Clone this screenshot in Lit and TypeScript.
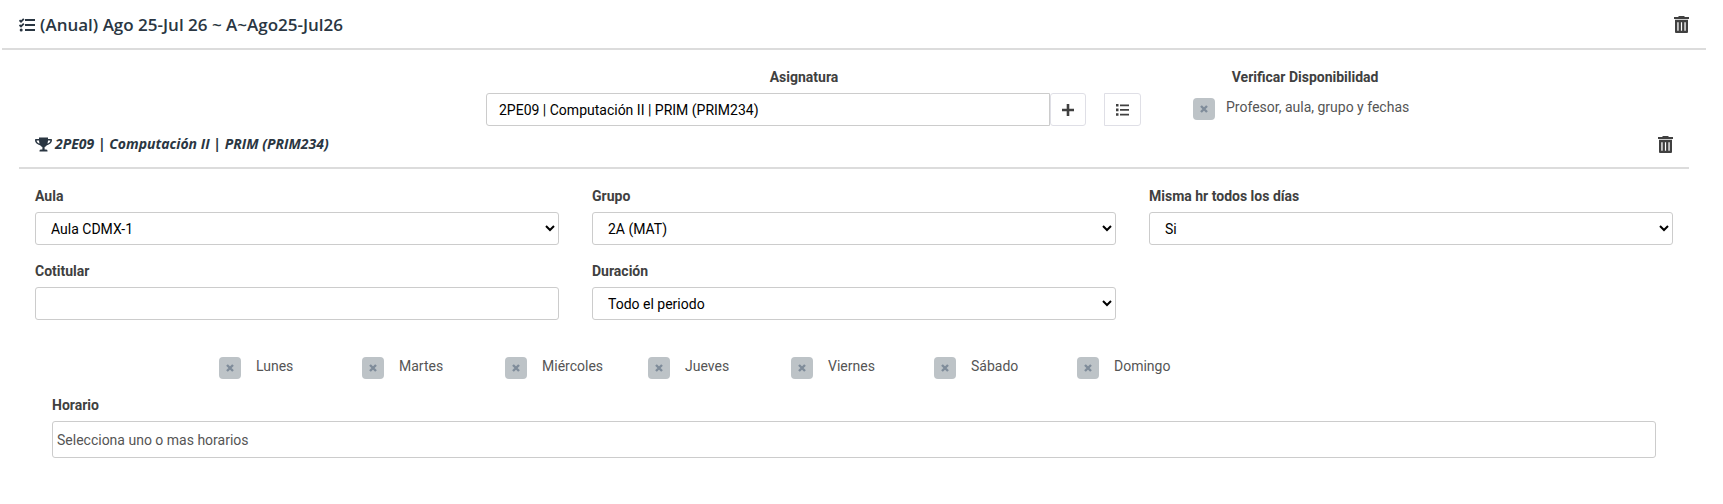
import { LitElement, html, css } from "lit";
import { customElement, property } from "lit/decorators.js";

const tasksIcon = html`<svg class="icon" width="17" height="14" viewBox="0 0 17 14" aria-hidden="true">
  <g fill="none" stroke="currentColor" stroke-width="1.8"><path d="M.5 2.200 2 3.700 4.800.800M.5 7 2 8.500 4.800 5.600" /></g>
  <g fill="currentColor"><circle cx="2.200" cy="12" r="1.500" /><path d="M6 1h10v2H6zM6 6h10v2H6zM6 11h10v2H6z" /></g>
</svg>`;

const trophyIcon = html`<svg class="icon" width="17" height="15" viewBox="0 0 17 15" aria-hidden="true">
  <path fill="currentColor" fill-rule="evenodd" d="M4 .5h9V2h3.200q.8 0 .8.800C17 6 14.500 7.800 11.800 8.200 11 9.300 10.200 9.800 9.600 10v2.500h1.200q1.700 0 1.700 1.300v.7h-8v-.7q0-1.300 1.700-1.300h1.200V10C6.800 9.800 6 9.300 5.200 8.200 2.500 7.800 0 6 0 2.800 0 2.200.3 2 .8 2H4zM1.600 3.500C1.800 5.200 3 6.200 4.600 6.600 4.200 5.700 4 4.600 4 3.500zm13.800 0H13c0 1.100-.2 2.200-.6 3.100 1.600-.4 2.800-1.400 3-3.100z" />
</svg>`;

const trashIcon = html`<svg width="15" height="17" viewBox="0 0 15 17" aria-hidden="true">
  <path fill="currentColor" d="M5 0h5l1 1h4v2H0V1h4z" />
  <path fill="currentColor" fill-rule="evenodd" d="M1 3.700h13V16q0 1-1 1H2q-1 0-1-1zM3.300 6.200v8.500h1.300V6.200zm3.600 0v8.500h1.200V6.200zm3.500 0v8.500h1.300V6.200z" />
</svg>`;

const plusIcon = html`<svg width="12" height="12" viewBox="0 0 12 12" aria-hidden="true">
  <path fill="currentColor" d="M4.700 0h2.600v4.700H12v2.600H7.300V12H4.700V7.300H0V4.700h4.700z" />
</svg>`;

const listIcon = html`<svg width="13" height="12" viewBox="0 0 13 12" aria-hidden="true">
  <path fill="currentColor" d="M0 0h2.500v2.600H0zM0 4.600h2.500v2.600H0zM0 9.200h2.500v2.600H0zM4 .500h9v1.700H4zM4 5.100h9v1.700H4zM4 9.700h9v1.700H4z" />
</svg>`;

@customElement("toggle-check")
export class ToggleCheck extends LitElement {
  @property() label = "";
  @property({ type: Boolean }) near = false;

  static styles = css`
    :host { display: block; }
    .toggle { display: flex; align-items: flex-start; gap: 15px; font-size: 14px; line-height: 18px; color: #555; white-space: nowrap; }
    .near { gap: 11px; }
    .box {
      appearance: none; flex: none; width: 22px; height: 22px; margin: 0; border-radius: 4px;
      background: #bdc3c7 url("data:image/svg+xml,%3Csvg xmlns='http://www.w3.org/2000/svg' width='8' height='8'%3E%3Cpath d='M1 1l6 6M7 1l-6 6' stroke='%237f8c9a' stroke-width='2.4'/%3E%3C/svg%3E") center / 8px 8px no-repeat;
    }
    .box:checked { background-color: #3498db; }
  `;

  render() {
    return html`<label class="toggle ${this.near ? "near" : ""}"><input class="box" type="checkbox" />${this.label}</label>`;
  }
}

@customElement("app-root")
export class AppRoot extends LitElement {
  static styles = css`
    * { box-sizing: border-box; }
    :host { display: block; padding: 0 17px 0 2px; background: #fff; color: #404040; font: 14px/20px Roboto, sans-serif; }
    .bar { display: flex; justify-content: space-between; align-items: center; border-bottom: 2px solid #dcdcdc; }
    .period { padding: 12px 17px 11px; }
    .subject { padding: 6px 16px 11px; }
    h1, h2 { display: flex; align-items: center; margin: 0; color: #2a3642; font-family: "Open Sans", sans-serif; }
    h1 { gap: 4px; font-size: 17px; line-height: 25px; font-weight: 600; }
    h2 { gap: 3px; font-size: 14px; line-height: 24px; font-weight: 700; font-style: italic; }
    .trash { display: flex; border: 0; padding: 0; background: none; color: inherit; }
    .body { padding: 17px 17px 46px; }
    .picker { display: grid; grid-template-columns: 467fr 655fr 52fr 496fr; }
    .group { grid-column: 2; }
    .check { grid-column: 4; justify-self: start; }
    .label { display: block; margin-bottom: 6px; font-weight: 700; }
    .centered { text-align: center; }
    .group .label { padding-right: 19px; }
    .check .label { margin-bottom: 11px; padding-left: 8px; }
    .controls { display: flex; }
    .field { display: block; width: 100%; height: 33px; border: 1px solid #ccc; border-radius: 3px; background: #fff; color: #000; font: inherit; padding: 0 12px; }
    select.field { padding: 0 11px; }
    .controls .field { flex: 1; min-width: 0; border-radius: 3px 0 0 3px; }
    .btn { display: flex; align-items: center; justify-content: center; flex: none; width: 36px; height: 33px; padding: 0; border: 1px solid #dfdfe6; border-radius: 3px; background: #fff; color: #404040; }
    .list { margin-left: 18px; width: 37px; border-radius: 0 3px 3px 0; }
    .details { padding: 17px 16px 0; }
    .fields { display: grid; grid-template-columns: repeat(3, 1fr); gap: 16px 33px; }
    .days { display: grid; grid-template-columns: 167fr repeat(7, 143fr) 436fr; margin: 37px 17px 16px; }
    .days toggle-check:first-child { grid-column: 2; }
    .schedule { padding: 0 17px; }
    .schedule .field { height: 37px; padding: 0 4px; }
    .field::placeholder { color: #555; opacity: 1; }
  `;

  private select(id: string, label: string, value: string) {
    return html`<div>
      <label class="label" for=${id}>${label}</label>
      <select class="field" id=${id}><option>${value}</option></select>
    </div>`;
  }

  render() {
    const days = ["Lunes", "Martes", "Miércoles", "Jueves", "Viernes", "Sábado", "Domingo"];
    return html`
      <header class="bar period">
        <h1>${tasksIcon}(Anual) Ago 25-Jul 26 ~ A~Ago25-Jul26</h1>
        <button class="trash">${trashIcon}</button>
      </header>
      <main class="body">
        <section class="picker">
          <div class="group">
            <label class="label centered" for="asignatura">Asignatura</label>
            <div class="controls">
              <input class="field" id="asignatura" .value=${"2PE09 | Computación II | PRIM (PRIM234)"} />
              <button class="btn">${plusIcon}</button>
              <button class="btn list">${listIcon}</button>
            </div>
          </div>
          <div class="check">
            <div class="label centered">Verificar Disponibilidad</div>
            <toggle-check near label="Profesor, aula, grupo y fechas"></toggle-check>
          </div>
        </section>
        <header class="bar subject">
          <h2>${trophyIcon}2PE09 | Computación II | PRIM (PRIM234)</h2>
          <button class="trash">${trashIcon}</button>
        </header>
        <section class="details">
          <div class="fields">
            ${this.select("aula", "Aula", "Aula CDMX-1")}
            ${this.select("grupo", "Grupo", "2A (MAT)")}
            ${this.select("misma", "Misma hr todos los días", "Si")}
            <div>
              <label class="label" for="cotitular">Cotitular</label>
              <input class="field" id="cotitular" />
            </div>
            ${this.select("duracion", "Duración", "Todo el periodo")}
          </div>
          <div class="days">${days.map((d) => html`<toggle-check label=${d}></toggle-check>`)}</div>
          <div class="schedule">
            <label class="label" for="horario">Horario</label>
            <input class="field" id="horario" placeholder="Selecciona uno o mas horarios" />
          </div>
        </section>
      </main>
    `;
  }
}
